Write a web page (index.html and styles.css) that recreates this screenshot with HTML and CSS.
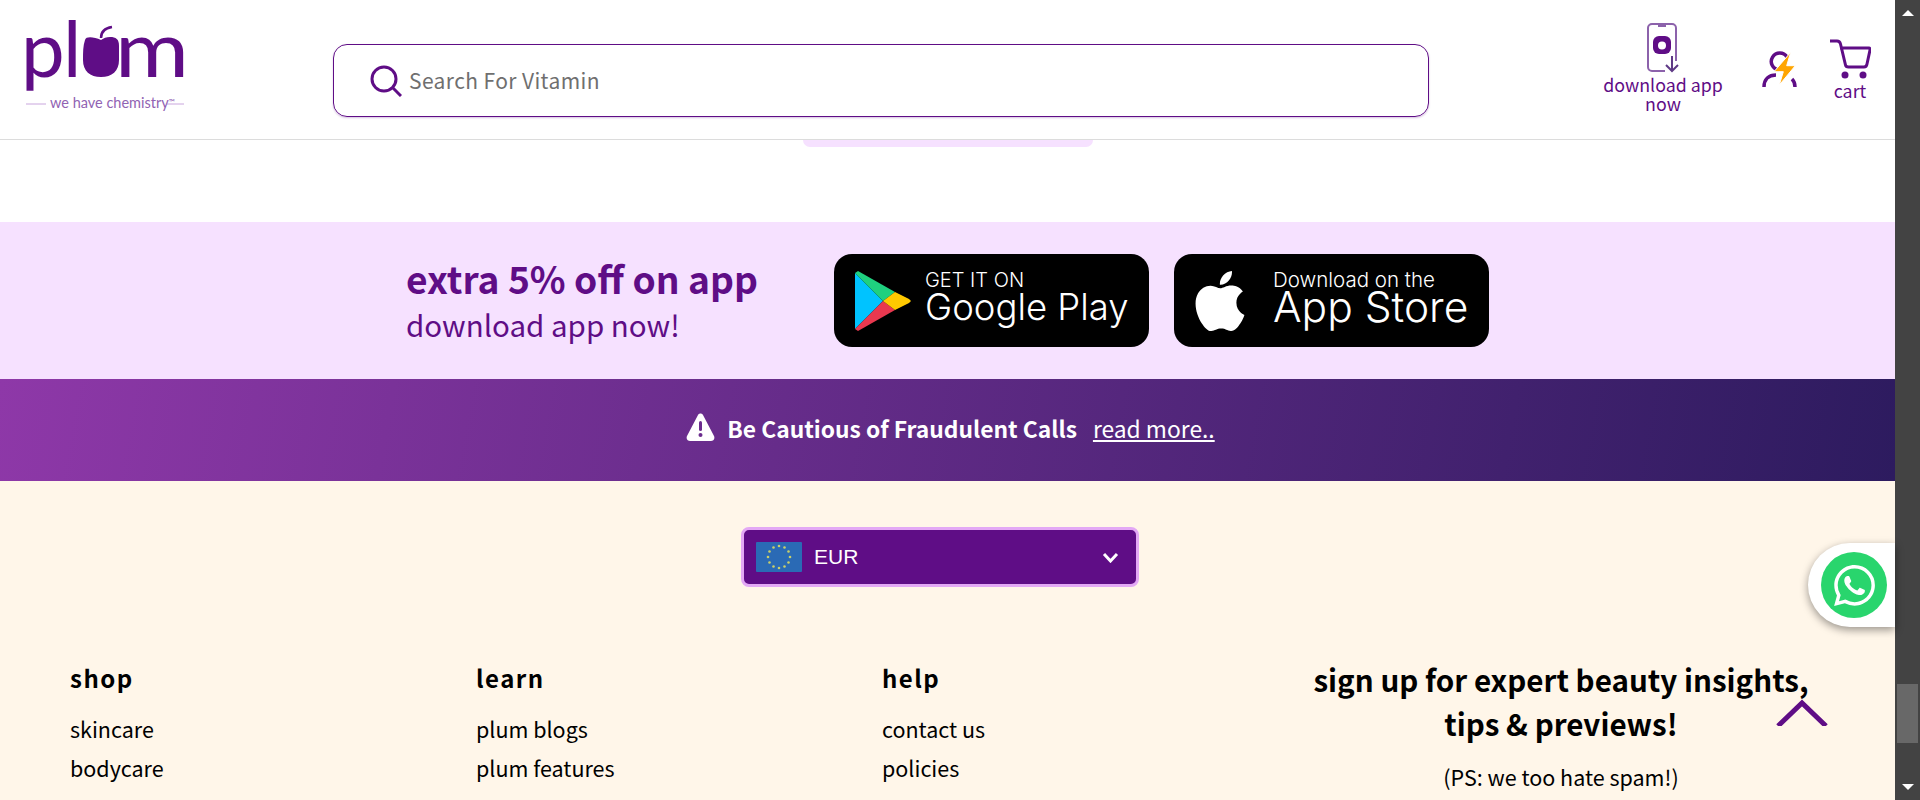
FILE: index.html
```html
<!DOCTYPE html>
<html lang="en">
<head>
  <meta charset="UTF-8">
  <meta name="viewport" content="width=device-width, initial-scale=1.0">
  <title>Plum</title>
  <link rel="stylesheet" href="styles.css">
</head>
<body>
  <div class="page">
    <main class="content">
      <header class="site-header">
        <a class="logo" href="#">
          <svg width="170" height="118" viewBox="0 0 170 118">
            <text class="logo-word" x="1" y="77">p</text>
            <text class="logo-word" x="43" y="77">l</text>
            <path class="logo-fill" d="M81 40C74 37 66 36 65 40C63 46 63 52 63 60C63 71 70 77 81 77C92 77 99 71 99 60L99 46C99 39 96 37 90 37C86 37 84 38 81 40z"/>
            <path class="logo-stem" d="M81 38c0-7 4-10 11-11"/>
            <text class="logo-word" x="95" y="77" textLength="74" lengthAdjust="spacingAndGlyphs">m</text>
            <line class="logo-rule" x1="6" y1="104" x2="26" y2="104"/>
            <line class="logo-rule" x1="147" y1="104" x2="164" y2="104"/>
            <text class="logo-tag" x="30" y="108">we have chemistry<tspan class="logo-tm" dy="-3">™</tspan></text>
          </svg>
        </a>

        <form class="search">
          <svg class="search-icon" width="32" height="32" viewBox="0 0 32 32">
            <circle cx="14" cy="14" r="12"/>
            <line x1="23" y1="23" x2="31" y2="31"/>
          </svg>
          <input type="text" placeholder="Search For Vitamin">
        </form>

        <nav class="actions">
          <a class="action action-app" href="#">
            <svg width="38" height="52" viewBox="0 0 38 52">
              <rect class="phone" x="5" y="2" width="28" height="47" rx="4"/>
              <line class="phone-notch" x1="15" y1="4" x2="23" y2="4"/>
              <rect class="phone-mark" x="10" y="14" width="18" height="18" rx="6"/>
              <circle class="phone-hole" cx="19" cy="23.500" r="4"/>
              <rect class="phone-hole" x="22" y="39" width="15" height="13"/>
              <path class="phone-arrow" d="M29 34v15M23 43l6 6 6-6"/>
            </svg>
            <span>download app<br>now</span>
          </a>
          <a class="action action-user" href="#">
            <svg width="36" height="38" viewBox="0 0 36 38">
              <path class="user-line" d="M17 19a8.500 8.500 0 1 1 8-13M2 36c0-8 5-12 12-12M30 28c2 2 3 5 3 8"/>
              <polygon class="user-bolt" points="28.700,1.300 12,20.700 21.300,20.700 17.300,34 33.300,14.700 24.700,14.700"/>
            </svg>
          </a>
          <a class="action action-cart" href="#">
            <svg width="42" height="40" viewBox="0 0 42 40">
              <path class="cart-line" d="M1 2h7c2 0 3 1 3.500 3l5 21c.3 1.500 1 2 3 2h16M11 9h29c1 0 1 1 1 2l-3 14c-.3 2-1 3-3 3"/>
              <circle class="cart-wheel" cx="16" cy="36" r="3.500"/>
              <circle class="cart-wheel" cx="34" cy="36" r="3.500"/>
            </svg>
            <span>cart</span>
          </a>
        </nav>
      </header>

      <div class="pill-strip">
        <div class="pill"></div>
      </div>

      <section class="app-banner">
        <div class="app-copy">
          <h2>extra 5% off on app</h2>
          <p>download app now!</p>
        </div>
        <a class="store" href="#">
          <svg width="56" height="60" viewBox="0 0 56 60">
            <polygon fill="#00c3ff" points="0,2 0,58 28,30"/>
            <polygon fill="#1fd07f" points="0,2 3,0 40,21 28,30"/>
            <polygon fill="#e9384f" points="0,58 3,60 40,39 28,30"/>
            <polygon fill="#ffc900" points="40,21 54,28 56,30 54,32 40,39 28,30"/>
          </svg>
          <span class="store-text store-play">
            <small>GET IT ON</small>
            <strong>Google Play</strong>
          </span>
        </a>
        <a class="store" href="#">
          <svg class="apple" width="60" height="60" viewBox="0 0 24 24" preserveAspectRatio="none">
            <path fill="#fff" d="M12.152 6.896c-.948 0-2.415-1.078-3.960-1.040-2.040.027-3.910 1.183-4.961 3.014-2.117 3.675-.546 9.103 1.519 12.090 1.013 1.454 2.208 3.090 3.792 3.039 1.520-.065 2.090-.987 3.935-.987 1.831 0 2.350.987 3.960.948 1.637-.026 2.676-1.480 3.676-2.948 1.156-1.688 1.636-3.325 1.662-3.415-.039-.013-3.182-1.221-3.220-4.857-.026-3.040 2.480-4.494 2.597-4.559-1.429-2.090-3.623-2.324-4.390-2.376-2-.156-3.675 1.090-4.610 1.090zM15.530 3.830c.843-1.012 1.400-2.427 1.245-3.830-1.207.052-2.662.805-3.532 1.818-.780.896-1.454 2.338-1.273 3.714 1.338.104 2.715-.688 3.559-1.701"/>
          </svg>
          <span class="store-text store-apple">
            <small>Download on the</small>
            <strong>App Store</strong>
          </span>
        </a>
      </section>

      <section class="notice">
        <svg class="notice-icon" width="29" height="28" viewBox="0 0 29 28">
          <path fill="#fff" d="M12 2c1-2 4-2 5 0l11 21c1 2 0 5-3 5H4c-3 0-4-3-3-5z"/>
          <rect fill="#6b2c8e" x="13" y="8" width="3" height="10" rx="1.500"/>
          <circle fill="#6b2c8e" cx="14.500" cy="22" r="2"/>
        </svg>
        <strong>Be Cautious of Fraudulent Calls</strong>
        <a href="#">read more..</a>
      </section>

      <footer class="site-footer">
        <div class="currency-row">
          <div class="currency">
            <svg width="46" height="30" viewBox="0 0 46 30">
              <rect width="46" height="30" rx="1" fill="#2a6ab5"/>
              <g fill="#c9cf6a">
                <circle cx="23" cy="4" r="1.300"/>
                <circle cx="28.500" cy="5.500" r="1.300"/>
                <circle cx="32.500" cy="9.500" r="1.300"/>
                <circle cx="34" cy="15" r="1.300"/>
                <circle cx="32.500" cy="20.500" r="1.300"/>
                <circle cx="28.500" cy="24.500" r="1.300"/>
                <circle cx="23" cy="26" r="1.300"/>
                <circle cx="17.500" cy="24.500" r="1.300"/>
                <circle cx="13.500" cy="20.500" r="1.300"/>
                <circle cx="12" cy="15" r="1.300"/>
                <circle cx="13.500" cy="9.500" r="1.300"/>
                <circle cx="17.500" cy="5.500" r="1.300"/>
              </g>
            </svg>
            <span class="currency-code">EUR</span>
            <svg class="currency-arrow" width="17" height="11" viewBox="0 0 17 11">
              <polyline points="2,2 8.500,9 15,2"/>
            </svg>
          </div>
        </div>

        <div class="footer-grid">
          <div class="footer-col">
            <h4>shop</h4>
            <a href="#">skincare</a>
            <a href="#">bodycare</a>
          </div>
          <div class="footer-col">
            <h4>learn</h4>
            <a href="#">plum blogs</a>
            <a href="#">plum features</a>
          </div>
          <div class="footer-col">
            <h4>help</h4>
            <a href="#">contact us</a>
            <a href="#">policies</a>
          </div>
          <div class="signup">
            <h3>sign up for expert beauty insights,<br>tips &amp; previews!</h3>
            <p>(PS: we too hate spam!)</p>
          </div>
        </div>
      </footer>
    </main>

    <div class="scrollbar">
      <div class="scroll-up"></div>
      <div class="scroll-thumb"></div>
      <div class="scroll-down"></div>
    </div>
  </div>

  <a class="whatsapp" href="#">
    <span class="whatsapp-circle">
      <svg width="41" height="41" viewBox="0 0 24 24">
        <path fill="#fff" d="M17.472 14.382c-.297-.149-1.758-.867-2.030-.967-.273-.099-.471-.148-.670.150-.197.297-.767.966-.940 1.164-.173.199-.347.223-.644.075-.297-.150-1.255-.463-2.390-1.475-.883-.788-1.480-1.761-1.653-2.059-.173-.297-.018-.458.130-.606.134-.133.298-.347.446-.520.149-.174.198-.298.298-.497.099-.198.050-.371-.025-.520-.075-.149-.669-1.612-.916-2.207-.242-.579-.487-.500-.669-.510-.173-.008-.371-.010-.570-.010-.198 0-.520.074-.792.372-.272.297-1.040 1.016-1.040 2.479 0 1.462 1.065 2.875 1.213 3.074.149.198 2.096 3.200 5.077 4.487.709.306 1.262.489 1.694.625.712.227 1.360.195 1.871.118.571-.085 1.758-.719 2.006-1.413.248-.694.248-1.289.173-1.413-.074-.124-.272-.198-.570-.347m-5.421 7.403h-.004a9.870 9.870 0 01-5.031-1.378l-.361-.214-3.741.982.998-3.648-.235-.374a9.860 9.860 0 01-1.510-5.260c.001-5.450 4.436-9.884 9.888-9.884 2.640 0 5.122 1.030 6.988 2.898a9.825 9.825 0 012.893 6.994c-.003 5.450-4.437 9.884-9.885 9.884m8.413-18.297A11.815 11.815 0 0012.050 0C5.495 0 .160 5.335.157 11.892c0 2.096.547 4.142 1.588 5.945L.057 24l6.305-1.654a11.882 11.882 0 005.683 1.448h.005c6.554 0 11.890-5.335 11.893-11.893a11.821 11.821 0 00-3.480-8.413z"/>
      </svg>
    </span>
  </a>

  <a class="to-top" href="#">
    <svg width="52" height="28" viewBox="0 0 52 28">
      <polyline points="2,28 26,5 50,28"/>
    </svg>
  </a>
</body>
</html>
```

FILE: styles.css
```css
* {
  box-sizing: border-box;
}

body {
  margin: 0;
  font-family: "Noto Sans CJK SC", "Noto Sans", sans-serif;
  color: #000;
  background: #fff;
  overflow: hidden;
}

a {
  color: inherit;
  text-decoration: none;
}

.page {
  display: flex;
  height: 100vh;
  overflow: hidden;
}

.content {
  flex: 1;
  min-width: 0;
}

/* header */
.site-header {
  display: flex;
  align-items: center;
  height: 140px;
  padding-left: 20px;
  border-bottom: 1px solid #dcdcdc;
}

.logo {
  display: block;
  align-self: flex-start;
  width: 313px;
}

.logo svg {
  display: block;
}

.logo-word {
  font-family: Lato, sans-serif;
  font-size: 78px;
  fill: #5f0d86;
}

.logo-fill {
  fill: #5f0d86;
}

.logo-stem {
  fill: none;
  stroke: #5f0d86;
  stroke-width: 2.5;
}

.logo-rule {
  stroke: #c9a6dd;
  stroke-width: 1;
}

.logo-tag {
  font-family: Lato, sans-serif;
  font-size: 14.5px;
  fill: #9163b3;
}

.logo-tm {
  font-size: 8px;
}

.search {
  display: flex;
  align-items: center;
  width: 1096px;
  height: 73px;
  margin-top: 22px;
  padding-left: 36px;
  border: 1px solid #5f0d86;
  border-radius: 14px;
  box-shadow: 0 1px 2px rgba(95, 13, 134, 0.25);
}

.search-icon {
  flex: none;
  fill: none;
  stroke: #5f0d86;
  stroke-width: 3;
}

.search input {
  flex: 1;
  margin: 0 0 2px 5px;
  border: none;
  outline: none;
  font-family: inherit;
  font-size: 21px;
  letter-spacing: 0.4px;
}

.search input::placeholder {
  color: #6f6f6f;
  opacity: 1;
}

.actions {
  display: flex;
  align-items: center;
  margin-left: 175px;
  color: #5f0d86;
}

.action {
  display: flex;
  flex-direction: column;
  align-items: center;
  font-size: 17.800px;
  line-height: 19px;
  text-align: center;
  white-space: nowrap;
}

.action svg {
  display: block;
}

.action-app {
  width: 118px;
  padding-bottom: 4px;
}

.action-app svg {
  margin: 0 3px 1px 0;
}

.action-user {
  margin-left: 40px;
}

.action-cart {
  margin-left: 31px;
}

.action-cart span {
  margin-top: 2px;
}

.phone {
  fill: none;
  stroke: #8c62ab;
  stroke-width: 2;
}

.phone-notch {
  stroke: #8c62ab;
  stroke-width: 2;
}

.phone-mark {
  fill: #5f0d86;
}

.phone-hole {
  fill: #fff;
}

.phone-arrow {
  fill: none;
  stroke: #5f3a86;
  stroke-width: 2;
}

.user-line {
  fill: none;
  stroke: #5f0d86;
  stroke-width: 3.5;
}

.user-bolt {
  fill: #ffa500;
  stroke: #fff;
  stroke-width: 1;
}

.cart-line {
  fill: none;
  stroke: #5f0d86;
  stroke-width: 3;
  stroke-linejoin: round;
}

.cart-wheel {
  fill: #5f0d86;
}

/* strip left over from the section above */
.pill-strip {
  display: flex;
  justify-content: center;
  height: 82px;
}

.pill {
  width: 290px;
  height: 7px;
  background: #f6e1ff;
  border-radius: 0 0 20px 20px;
}

/* app banner */
.app-banner {
  display: flex;
  align-items: center;
  justify-content: center;
  height: 157px;
  background: #f6e1ff;
  color: #5f0d86;
}

.app-copy {
  width: 428px;
}

.app-copy h2 {
  margin: 0;
  font-size: 37.200px;
  line-height: 46px;
  font-weight: 700;
}

.app-copy p {
  margin: 0;
  font-size: 29.500px;
  line-height: 46px;
}

.store {
  display: flex;
  align-items: center;
  width: 315px;
  height: 93px;
  margin-right: 25px;
  padding-left: 21px;
  background: #000;
  border-radius: 18px;
  color: #fff;
}

.store:last-child {
  margin-right: 0;
}

.store svg {
  flex: none;
}

.store .apple {
  margin-left: -5px;
}

.store-text {
  display: flex;
  flex-direction: column;
  padding-bottom: 8px;
  font-family: Inter, sans-serif;
}

.store-text small {
  font-size: 20px;
  line-height: 20px;
  font-weight: 300;
}

.store-text strong {
  font-weight: 300;
}

.store-play {
  margin-left: 14px;
}

.store-play strong {
  font-size: 36.500px;
  line-height: 34px;
}

.store-apple {
  margin-left: 23px;
}

.store-apple small {
  font-size: 20.500px;
}

.store-apple strong {
  font-size: 42.500px;
  line-height: 34px;
}

/* fraud notice */
.notice {
  display: flex;
  align-items: center;
  justify-content: center;
  height: 102px;
  padding: 0 0 2px 6px;
  background: linear-gradient(100deg, #8e38a8 0%, #2d1b5f 100%);
  color: #fff;
  font-size: 22.800px;
  line-height: 32px;
}

.notice-icon {
  margin-top: -4px;
}

.notice strong {
  margin-left: 12px;
}

.notice a {
  margin-left: 16px;
  text-decoration: underline;
}

/* footer */
.site-footer {
  height: 319px;
  background: #fff6e9;
}

.currency-row {
  display: flex;
  justify-content: center;
  padding: 46px 15px 0 0;
}

.currency {
  display: flex;
  align-items: center;
  width: 398px;
  height: 60px;
  padding: 0 17px 0 12px;
  background: #5f0d86;
  border: 3px solid #e3a8f5;
  border-radius: 8px;
  color: #fff;
}

.currency-code {
  flex: 1;
  margin-left: 12px;
  font-family: "Liberation Sans", Arial, sans-serif;
  font-size: 21px;
}

.currency-arrow {
  fill: none;
  stroke: #fff;
  stroke-width: 3;
}

.footer-grid {
  display: grid;
  grid-template-columns: 406px 406px 406px 546px;
  padding: 71px 0 0 70px;
}

.footer-col h4 {
  margin: 0 0 11px;
  font-size: 24px;
  line-height: 40px;
  font-weight: 700;
  letter-spacing: 1.5px;
}

.footer-col a {
  display: block;
  font-size: 21.500px;
  line-height: 39px;
}

.signup {
  text-align: center;
}

.signup h3 {
  margin: 0;
  font-size: 29.600px;
  line-height: 44px;
  font-weight: 700;
}

.signup p {
  margin: 15px 0 0;
  font-size: 21.500px;
  line-height: 32px;
}

/* fake scrollbar, the window is photographed with it */
.scrollbar {
  position: relative;
  flex: none;
  width: 25px;
  background: #434343;
}

.scroll-up,
.scroll-down {
  position: absolute;
  left: 7px;
  width: 0;
  height: 0;
  border-left: 6px solid transparent;
  border-right: 6px solid transparent;
}

.scroll-up {
  top: 10px;
  border-bottom: 6px solid #fff;
}

.scroll-down {
  bottom: 10px;
  border-top: 6px solid #fff;
}

.scroll-thumb {
  position: absolute;
  top: 684px;
  left: 2px;
  width: 21px;
  height: 59px;
  background: #686868;
}

/* floating buttons */
.whatsapp {
  position: fixed;
  top: 543px;
  left: 1808px;
  display: flex;
  align-items: center;
  width: 87px;
  height: 84px;
  padding-left: 13px;
  background: #fff;
  border-radius: 42px 0 0 42px;
  box-shadow: 0 3px 8px rgba(0, 0, 0, 0.4);
}

.whatsapp-circle {
  display: flex;
  align-items: center;
  justify-content: center;
  width: 66px;
  height: 66px;
  background: #29d56d;
  border-radius: 50%;
}

.to-top {
  position: fixed;
  top: 698px;
  left: 1776px;
}

.to-top svg {
  display: block;
  fill: none;
  stroke: #5f0d86;
  stroke-width: 5;
}
```
